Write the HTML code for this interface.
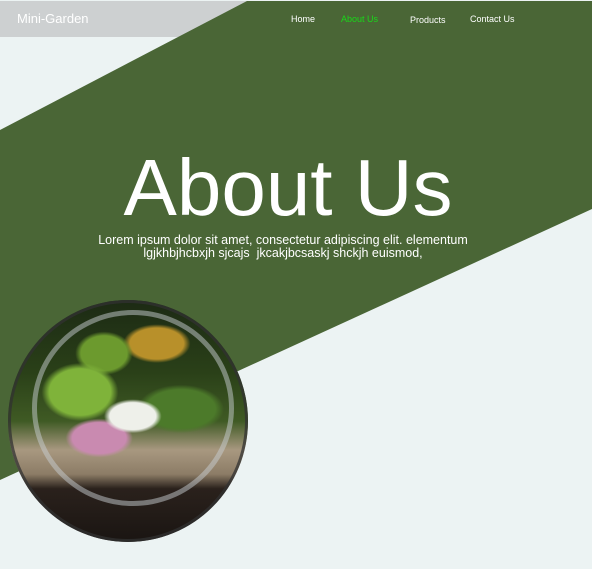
<!DOCTYPE html>
<html><head><style>
body{margin:0;width:592px;height:569px;overflow:hidden;background:#ecf3f3;font-family:"Liberation Sans",sans-serif;position:relative}
.hdr{position:absolute;left:0;top:1px;width:592px;height:36px;background:#cdd0d1}
svg.bg{position:absolute;left:0;top:0}
.logo{position:absolute;left:17px;top:11px;color:#fff;font-size:13px}
.nav{position:absolute;top:14px;font-size:9px;color:#fff}
h1{position:absolute;left:0;width:576px;text-align:center;top:148px;margin:0;font-weight:normal;font-size:80px;color:#fff;line-height:80px}
p{position:absolute;left:0;width:566px;text-align:center;top:234px;margin:0;font-size:12.5px;line-height:13px;color:#fff}
.bowl{position:absolute;left:8px;top:300px;width:240px;height:242px;border-radius:50%;overflow:hidden;
background:radial-gradient(ellipse 12% 7% at 52% 48%,#eef0ea 0 80%,transparent 100%),radial-gradient(ellipse 14% 8% at 38% 57%,#c98ab0 0 80%,transparent 100%),radial-gradient(ellipse 16% 12% at 30% 38%,#7fb33a 0 80%,transparent 100%),radial-gradient(ellipse 12% 9% at 40% 22%,#6c9a2e 0 80%,transparent 100%),radial-gradient(ellipse 14% 8% at 62% 18%,#b8902a 0 80%,transparent 100%),radial-gradient(ellipse 18% 10% at 72% 45%,#4c7a2a 0 80%,transparent 100%),linear-gradient(#1c2a14 0%,#2a4018 30%,#3f5a24 50%,#a89880 62%,#8c7c66 72%,#2a211c 78%,#1a1512 100%)}
.ring{position:absolute;left:8px;top:300px;width:234px;height:236px;border-radius:50%;border:3px solid rgba(50,50,50,.75)}
.ring2{position:absolute;left:32px;top:310px;width:192px;height:186px;border-radius:50%;border:5px solid rgba(200,205,210,.5)}
</style></head><body>
<div class="hdr"></div>
<svg class="bg" width="592" height="569"><polygon points="247,1 592,1 592,209 0,480 0,130" fill="#4a6636"/></svg>
<div class="logo">Mini-Garden</div>
<div class="nav" style="left:291px">Home</div>
<div class="nav" style="left:341px;color:#19d819">About Us</div>
<div class="nav" style="left:410px;top:15px">Products</div>
<div class="nav" style="left:470px">Contact Us</div>
<h1>About Us</h1>
<p>Lorem ipsum dolor sit amet, consectetur adipiscing elit. elementum<br>lgjkhbjhcbxjh sjcajs &nbsp;jkcakjbcsaskj shckjh euismod,</p>
<div class="bowl"></div><div class="ring"></div><div class="ring2"></div>
</body></html>
